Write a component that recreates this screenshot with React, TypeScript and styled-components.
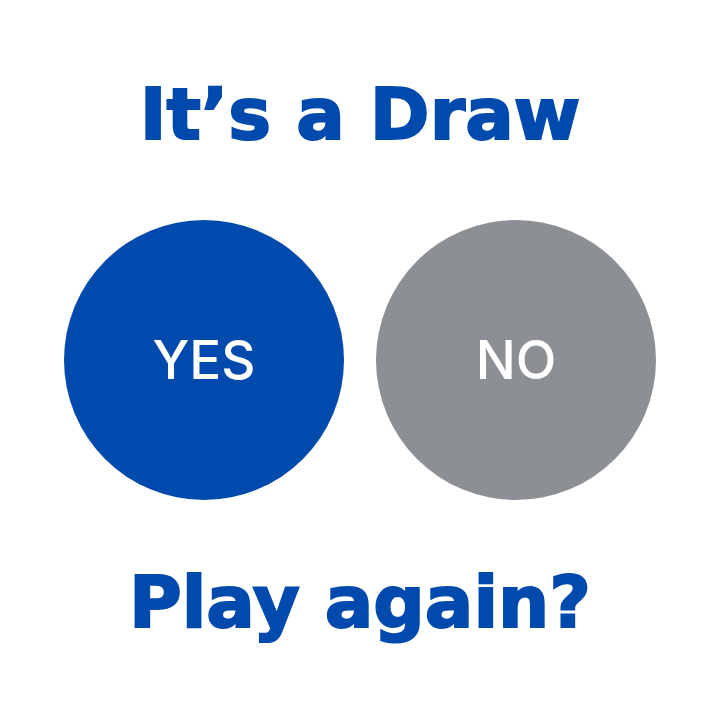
import React from "react";
import styled, { createGlobalStyle } from "styled-components";

const GlobalStyle = createGlobalStyle`
  * { box-sizing: border-box; }
  body { margin: 0; background: #ffffff; }
`;

const Screen = styled.main`
  display: flex;
  flex-direction: column;
  align-items: center;
  justify-content: center;
  gap: 58px;
  min-height: 100vh;
  padding: 16px;
`;

const Heading = styled.h1`
  margin: 0;
  padding-bottom: 4px;
  color: #004aad;
  font-family: "DejaVu Sans", Verdana, sans-serif;
  font-size: 72px;
  font-weight: 700;
  line-height: 88px;
  text-align: center;
  -webkit-text-stroke: 2px currentColor;
  stroke-linejoin: round;
`;

const Choices = styled.div`
  display: flex;
  flex-wrap: wrap;
  justify-content: center;
  gap: 32px;
`;

const ChoiceButton = styled.button<{ $tone: string }>`
  display: flex;
  align-items: center;
  justify-content: center;
  width: 280px;
  height: 280px;
  padding: 0;
  border: 0;
  border-radius: 50%;
  background: ${({ $tone }) => $tone};
  color: #ffffff;
  font-family: Inter, "Open Sans", sans-serif;
  font-size: 53px;
  font-optical-sizing: none;
  font-weight: 500;
  line-height: 64px;
  cursor: pointer;
`;

export default function App() {
  return (
    <>
      <GlobalStyle />
      <Screen>
        <Heading>It’s a Draw</Heading>
        <Choices>
          <ChoiceButton type="button" $tone="#004aad">YES</ChoiceButton>
          <ChoiceButton type="button" $tone="#8c9094">NO</ChoiceButton>
        </Choices>
        <Heading as="h2">Play again?</Heading>
      </Screen>
    </>
  );
}
